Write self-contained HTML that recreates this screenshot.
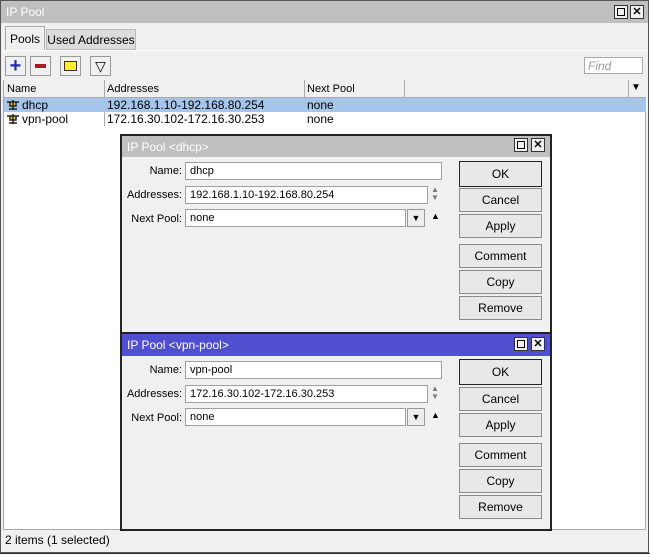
<!DOCTYPE html>
<html><head><style>
*{box-sizing:border-box;margin:0;padding:0}
body{width:650px;height:557px;background:#fff;font-family:"Liberation Sans",sans-serif;font-size:11px;color:#000;position:relative;overflow:hidden}
.a{position:absolute}
.win{left:0;top:0;width:649px;height:553px;border:1px solid #555;background:#f0f0f0}
.tb{background:#bfbfbf;color:#fff;font-size:12px;padding:4px 5px}
.wb{width:14px;height:14px;border:1px solid #333;background:#f0f0f0;font-size:11px;line-height:12px;text-align:center;color:#000;font-weight:bold}
.inp{background:#fff;border:1px solid #a0a0a0;height:18px;padding:1px 4px;font-size:11px;line-height:14px}
.btn{left:459px;width:83px;background:#e8e8e8;border:1px solid #8a8a8a;text-align:center;font-size:12px;line-height:22px;height:24px}
.lbl{width:60px;text-align:right;font-size:11px}
.dlg{left:120px;width:432px;border:2px solid #222;background:#f0f0f0}
</style></head><body>
<div class="a win"></div>
<div class="a tb" style="left:1px;top:1px;width:647px;height:22px">IP Pool</div>
<div class="a wb" style="left:614px;top:5px"><div style="margin:2px;width:8px;height:8px;border:1px solid #000"></div></div>
<div class="a wb" style="left:630px;top:5px">✕</div>
<div class="a" style="left:5px;top:26px;width:40px;height:24px;border:1px solid #aaa;border-bottom:none;background:#f0f0f0;text-align:center;line-height:24px;font-size:12px">Pools</div>
<div class="a" style="left:46px;top:29px;width:90px;height:21px;border:1px solid #bbb;background:#dcdcdc;text-align:center;line-height:20px;font-size:12px">Used Addresses</div>
<div class="a" style="left:1px;top:50px;width:647px;border-top:1px solid #fff"></div>
<div class="a" style="left:5px;top:56px;width:21px;height:20px;border:1px solid #999;color:#1a2fb0;font-size:20px;font-weight:bold;line-height:18px;text-align:center">+</div>
<div class="a" style="left:30px;top:56px;width:21px;height:20px;border:1px solid #999"><div style="margin:7px 4px;height:4px;background:#b0182a"></div></div>
<div class="a" style="left:60px;top:56px;width:21px;height:20px;border:1px solid #999"><div style="margin:4px 3px;height:10px;background:#ffef30;border:1px solid #333"></div></div>
<div class="a" style="left:90px;top:56px;width:21px;height:20px;border:1px solid #999;text-align:center;font-size:14px;line-height:18px">▽</div>
<div class="a" style="left:584px;top:57px;width:59px;height:17px;border:1px solid #aaa;background:#fff;color:#999;font-style:italic;padding:1px 3px;font-size:12px">Find</div>
<div class="a" style="left:3px;top:80px;width:643px;height:450px;background:#fff;border:1px solid #aaa"></div>
<div class="a" style="left:4px;top:80px;width:642px;height:18px;background:#f0f0f0;border-bottom:1px solid #aaa"></div>
<div class="a" style="left:7px;top:83px">Name</div>
<div class="a" style="left:104px;top:80px;height:46px;border-left:1px solid #aaa"></div>
<div class="a" style="left:107px;top:83px">Addresses</div>
<div class="a" style="left:304px;top:80px;height:18px;border-left:1px solid #aaa"></div>
<div class="a" style="left:307px;top:83px">Next Pool</div>
<div class="a" style="left:404px;top:80px;height:18px;border-left:1px solid #aaa"></div>
<div class="a" style="left:628px;top:80px;height:18px;border-left:1px solid #aaa"></div>
<div class="a" style="left:631px;top:82px;font-size:10px">▼</div>
<div class="a" style="left:4px;top:98px;width:642px;height:14px;background:#a5c5ea"></div>
<svg class="a" style="left:6px;top:99px" width="14" height="12"><path d="M1 3H13M7 1V11M4 3V7H10V3M3 10H11" stroke="#222" stroke-width="1.5" fill="#f0e000"/></svg>
<div class="a" style="left:22px;top:98px;font-size:12px">dhcp</div>
<div class="a" style="left:107px;top:98px;font-size:12px">192.168.1.10-192.168.80.254</div>
<div class="a" style="left:307px;top:98px;font-size:12px">none</div>
<svg class="a" style="left:6px;top:113px" width="14" height="12"><path d="M1 3H13M7 1V11M4 3V7H10V3M3 10H11" stroke="#222" stroke-width="1.5" fill="#f0e000"/></svg>
<div class="a" style="left:22px;top:112px;font-size:12px">vpn-pool</div>
<div class="a" style="left:107px;top:112px;font-size:12px">172.16.30.102-172.16.30.253</div>
<div class="a" style="left:307px;top:112px;font-size:12px">none</div>
<div class="a" style="left:5px;top:533px;font-size:12px">2 items (1 selected)</div>
<div class="a" style="left:0;top:553px;width:650px;border-top:1px solid #333"></div>

<div class="a dlg" style="top:134px;height:200px"></div>
<div class="a tb" style="left:122px;top:136px;width:428px;height:21px">IP Pool &lt;dhcp&gt;</div>
<div class="a dlg" style="top:332px;height:199px"></div>
<div class="a tb" style="left:122px;top:334px;width:428px;height:22px;background:#4f4fd0">IP Pool &lt;vpn-pool&gt;</div>

<div class="a wb" style="left:514px;top:138px"><div style="margin:2px;width:8px;height:8px;border:1px solid #000"></div></div>
<div class="a wb" style="left:531px;top:138px">✕</div>
<div class="a wb" style="left:514px;top:337px"><div style="margin:2px;width:8px;height:8px;border:1px solid #000"></div></div>
<div class="a wb" style="left:531px;top:337px">✕</div>

<div class="a lbl" style="left:122px;top:165px">Name:</div>
<div class="a inp" style="left:185px;top:162px;width:257px">dhcp</div>
<div class="a lbl" style="left:122px;top:189px">Addresses:</div>
<div class="a inp" style="left:185px;top:186px;width:243px">192.168.1.10-192.168.80.254</div>
<div class="a" style="left:431px;top:186px;font-size:8px;line-height:8px;color:#777">▲<br>▼</div>
<div class="a lbl" style="left:122px;top:213px">Next Pool:</div>
<div class="a inp" style="left:185px;top:209px;width:221px">none</div>
<div class="a" style="left:407px;top:209px;width:18px;height:18px;border:1px solid #999;background:#eee;font-size:9px;text-align:center;line-height:16px">▼</div>
<div class="a" style="left:431px;top:211px;font-size:9px">▲</div>

<div class="a lbl" style="left:122px;top:364px">Name:</div>
<div class="a inp" style="left:185px;top:361px;width:257px">vpn-pool</div>
<div class="a lbl" style="left:122px;top:388px">Addresses:</div>
<div class="a inp" style="left:185px;top:385px;width:243px">172.16.30.102-172.16.30.253</div>
<div class="a" style="left:431px;top:385px;font-size:8px;line-height:8px;color:#777">▲<br>▼</div>
<div class="a lbl" style="left:122px;top:412px">Next Pool:</div>
<div class="a inp" style="left:185px;top:408px;width:221px">none</div>
<div class="a" style="left:407px;top:408px;width:18px;height:18px;border:1px solid #999;background:#eee;font-size:9px;text-align:center;line-height:16px">▼</div>
<div class="a" style="left:431px;top:410px;font-size:9px">▲</div>

<div class="a btn" style="top:161px;height:26px;line-height:24px;border-color:#222">OK</div>
<div class="a btn" style="top:188px">Cancel</div>
<div class="a btn" style="top:214px">Apply</div>
<div class="a btn" style="top:244px">Comment</div>
<div class="a btn" style="top:270px">Copy</div>
<div class="a btn" style="top:296px">Remove</div>

<div class="a btn" style="top:359px;height:26px;line-height:24px;border-color:#222">OK</div>
<div class="a btn" style="top:387px">Cancel</div>
<div class="a btn" style="top:413px">Apply</div>
<div class="a btn" style="top:443px">Comment</div>
<div class="a btn" style="top:469px">Copy</div>
<div class="a btn" style="top:495px">Remove</div>
</body></html>
